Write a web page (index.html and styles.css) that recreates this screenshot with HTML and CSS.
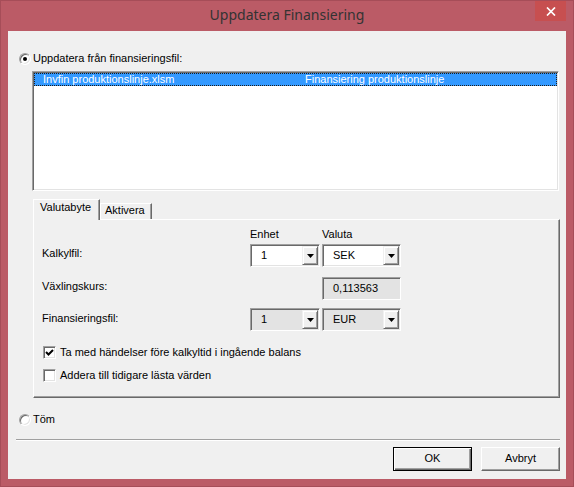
FILE: index.html
```html
<!DOCTYPE html>
<html lang="sv">
<head>
<meta charset="utf-8">
<title>Uppdatera Finansiering</title>
<link rel="stylesheet" href="styles.css">
</head>
<body>
<div class="window">
  <div class="titlebar">
    <span></span>
    <div class="title">Uppdatera Finansiering</div>
    <div class="close">
      <svg width="10" height="9" viewBox="0 0 10 9"><path d="M1 0.5 L9 8.5 M9 0.5 L1 8.5" stroke="#fff" stroke-width="1.7" fill="none"/></svg>
    </div>
  </div>
  <div class="client">
    <div class="radio-row first">
      <span class="radio checked"></span><span class="rlabel">Uppdatera från finansieringsfil:</span>
    </div>
    <div class="listbox">
      <div class="lrow selected"><span class="c1">Invfin produktionslinje.xlsm</span><span class="c2">Finansiering produktionslinje</span></div>
    </div>
    <div class="tabs">
      <div class="tab active">Valutabyte</div>
      <div class="tab">Aktivera</div>
    </div>
    <div class="panel">
      <div class="frow head">
        <span></span><span>Enhet</span><span>Valuta</span>
      </div>
      <div class="frow r1">
        <span class="lbl">Kalkylfil:</span>
        <div class="combo"><span class="val">1</span><span class="arrow"><svg width="7" height="4" viewBox="0 0 7 4"><path d="M0 0 H7 L3.5 4 Z" fill="#000"/></svg></span></div>
        <div class="combo"><span class="val">SEK</span><span class="arrow"><svg width="7" height="4" viewBox="0 0 7 4"><path d="M0 0 H7 L3.5 4 Z" fill="#000"/></svg></span></div>
      </div>
      <div class="frow r2">
        <span class="lbl">Växlingskurs:</span>
        <span></span>
        <div class="field">0,113563</div>
      </div>
      <div class="frow r3">
        <span class="lbl">Finansieringsfil:</span>
        <div class="combo disabled"><span class="val">1</span><span class="arrow"><svg width="7" height="4" viewBox="0 0 7 4"><path d="M0 0 H7 L3.5 4 Z" fill="#000"/></svg></span></div>
        <div class="combo disabled"><span class="val">EUR</span><span class="arrow"><svg width="7" height="4" viewBox="0 0 7 4"><path d="M0 0 H7 L3.5 4 Z" fill="#000"/></svg></span></div>
      </div>
      <div class="check-row c1row">
        <span class="checkbox"><svg width="9" height="9" viewBox="0 0 9 9"><path d="M1 4 L3.5 6.5 L8 2" stroke="#000" stroke-width="2" fill="none"/></svg></span>
        <span>Ta med händelser före kalkyltid i ingående balans</span>
      </div>
      <div class="check-row c2row">
        <span class="checkbox"></span>
        <span>Addera till tidigare lästa värden</span>
      </div>
    </div>
    <div class="radio-row second">
      <span class="radio"></span><span class="rlabel">Töm</span>
    </div>
    <div class="sep"></div>
    <div class="buttons">
      <div class="btn default">OK</div>
      <div class="btn">Avbryt</div>
    </div>
  </div>
</div>
</body>
</html>
```
FILE: styles.css
```css
* { box-sizing: border-box; }
html, body { margin: 0; padding: 0; }
body {
  font-family: "Liberation Sans", Arial, sans-serif;
  font-size: 11px;
  color: #000;
  background: #bb5b66;
}
.window {
  width: 574px;
  height: 487px;
  background: #bb5b66;
  border: 1px solid #a64d58;
  display: flex;
  flex-direction: column;
}
.titlebar {
  height: 30px;
  display: grid;
  grid-template-columns: 1fr auto 1fr;
}
.title {
  font-family: "Noto Sans", "Open Sans", sans-serif;
  font-size: 14px;
  line-height: 20px;
  margin-top: 4px;
  color: #333;
}
.close {
  justify-self: end;
  width: 31px;
  height: 20px;
  margin-right: 7px;
  background: #c74f50;
  display: flex;
  align-items: center;
  justify-content: center;
}
.client {
  margin: 0 7px 7px 7px;
  height: 448px;
  background: #f0f0f0;
  display: flex;
  flex-direction: column;
}
.radio-row {
  display: flex;
  align-items: center;
  height: 13px;
  line-height: 13px;
  padding-left: 11px;
  gap: 2px;
}
.radio-row.first { margin-top: 21px; }
.radio-row.second { margin-top: 15px; }
.radio {
  width: 12px;
  height: 12px;
  border-radius: 50%;
  background: #fff;
  border: 1px solid;
  border-color: #a0a0a0 #fff #fff #a0a0a0;
  box-shadow: inset 1px 1px #696969, inset -1px -1px #e3e3e3;
  display: flex;
  align-items: center;
  justify-content: center;
}
.radio.checked::after {
  content: "";
  width: 4px;
  height: 4px;
  border-radius: 50%;
  background: #000;
}
.listbox {
  margin: 6px 0 0 24px;
  width: 527px;
  height: 120px;
  background: #fff;
  border: 1px solid;
  border-color: #a0a0a0 #fff #fff #a0a0a0;
  box-shadow: inset 1px 1px #696969, inset -1px -1px #e3e3e3;
  padding: 1px;
}
.lrow {
  height: 13px;
  line-height: 11px;
  display: flex;
  padding-left: 8px;
}
.lrow.selected {
  background: #3399ff;
  color: #fff;
  border: 1px dotted #1c1c1c;
}
.lrow .c1 { width: 262px; }
.tabs {
  margin: 8px 0 0 25px;
  height: 20px;
  display: flex;
  align-items: flex-end;
  position: relative;
  z-index: 1;
}
.tab {
  height: 16px;
  line-height: 13px;
  padding: 0 0 0 4px;
  width: 52px;
  background: #f0f0f0;
  border-top: 1px solid #fff;
  border-left: 1px solid #fff;
  border-right: 1px solid #696969;
  box-shadow: inset -1px 0 #a0a0a0;
}
.tab.active {
  height: 21px;
  width: 67px;
  margin-bottom: -1px;
  padding: 1px 0 0 6px;
}
.panel {
  margin-left: 25px;
  width: 527px;
  height: 179px;
  border: 1px solid;
  border-color: #fff #696969 #696969 #fff;
  box-shadow: inset -1px -1px #a0a0a0;
  padding: 8px 0 0 8px;
  display: flex;
  flex-direction: column;
}
.frow {
  display: grid;
  grid-template-columns: 206px 70px 79px;
  column-gap: 2px;
  line-height: 13px;
}
.frow.head { height: 13px; }
.frow.r1 { margin-top: 3px; }
.frow.r2 { margin-top: 10px; }
.frow.r3 { margin-top: 8px; }
.lbl { padding-top: 3px; }
.frow.r3 .lbl { padding-top: 4px; }
.combo, .field {
  height: 23px;
  border: 1px solid;
  border-color: #a0a0a0 #fff #fff #a0a0a0;
  box-shadow: inset 1px 1px #696969, inset -1px -1px #e3e3e3;
  padding: 1px;
  background: #fff;
  display: flex;
}
.combo.disabled, .field { background: #e3e3e3; }
.combo .val {
  flex: 1;
  padding-left: 9px;
  line-height: 19px;
}
.field {
  padding-left: 10px;
  line-height: 19px;
}
.arrow {
  width: 16px;
  height: 19px;
  background: #f0f0f0;
  border: 1px solid;
  border-color: #f0f0f0 #696969 #696969 #f0f0f0;
  box-shadow: inset 1px 1px #fff, inset -1px -1px #a0a0a0;
  display: flex;
  align-items: center;
  justify-content: center;
  padding-top: 1px;
}
.check-row {
  display: flex;
  align-items: center;
  height: 13px;
  line-height: 13px;
  padding-left: 1px;
  gap: 4px;
}
.check-row.c1row { margin-top: 15px; }
.check-row.c2row { margin-top: 10px; }
.checkbox {
  width: 13px;
  height: 13px;
  background: #fff;
  border: 1px solid;
  border-color: #a0a0a0 #fff #fff #a0a0a0;
  box-shadow: inset 1px 1px #696969, inset -1px -1px #e3e3e3;
  display: flex;
  align-items: center;
  justify-content: center;
}
.sep {
  margin: 13px 0 0 8px;
  width: 544px;
  height: 2px;
  border-top: 1px solid #a0a0a0;
  border-bottom: 1px solid #fff;
}
.buttons {
  margin-top: 6px;
  display: flex;
  justify-content: flex-end;
  gap: 9px;
  padding-right: 6px;
}
.btn {
  width: 79px;
  height: 24px;
  line-height: 20px;
  text-align: center;
  background: #f0f0f0;
  border: 1px solid;
  border-color: #fff #696969 #696969 #fff;
  box-shadow: inset -1px -1px #a0a0a0;
}
.btn.default {
  border: 1px solid #000;
  box-shadow: inset 1px 1px #fff, inset -1px -1px #696969, inset -2px -2px #a0a0a0;
}
```
